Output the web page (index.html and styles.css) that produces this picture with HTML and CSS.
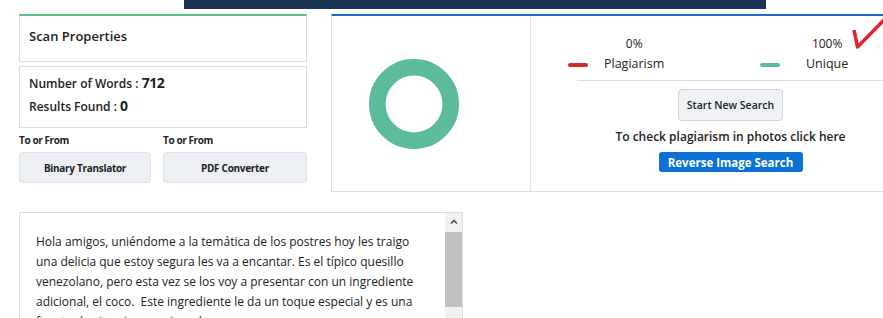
FILE: index.html
```html
<!DOCTYPE html>
<html lang="es">
<head>
    <meta charset="UTF-8">
    <meta name="viewport" content="width=device-width, initial-scale=1.0">
    <title>Plagiarism Report</title>
    <link rel="stylesheet" href="styles.css">
</head>
<body>
    <div class="topbar"></div>

    <div class="report">
        <div class="side">
            <div class="box box-head">Scan Properties</div>
            <div class="box box-stats">
                <p>Number of Words : <b>712</b></p>
                <p>Results Found : <b>0</b></p>
            </div>
            <div class="tools">
                <div class="tool">
                    <span class="tool-label">To or From</span>
                    <button class="tool-btn">Binary Translator</button>
                </div>
                <div class="tool">
                    <span class="tool-label">To or From</span>
                    <button class="tool-btn">PDF Converter</button>
                </div>
            </div>
        </div>

        <div class="result">
            <div class="chart">
                <svg width="90" height="90" viewBox="0 0 90 90">
                    <circle cx="45" cy="45" r="36.7" fill="none" stroke="#5cbb9a" stroke-width="16.6"/>
                </svg>
            </div>
            <div class="summary">
                <div class="legend">
                    <div class="legend-item first">
                        <span class="dash red"></span>
                        <div class="legend-text">
                            <span class="pct">0%</span>
                            <span class="name">Plagiarism</span>
                        </div>
                    </div>
                    <div class="legend-item">
                        <span class="dash green"></span>
                        <div class="legend-text">
                            <span class="pct">100%</span>
                            <span class="name">Unique</span>
                        </div>
                    </div>
                </div>
                <div class="actions">
                    <button class="new-search">Start New Search</button>
                    <p class="hint">To check plagiarism in photos click here</p>
                    <button class="reverse">Reverse Image Search</button>
                </div>
            </div>
            <svg class="tick" width="36" height="34" viewBox="0 0 36 34">
                <polyline points="3,12 6.5,29 35,0" fill="none" stroke="#e3222b" stroke-width="3.6" stroke-linejoin="round"/>
            </svg>
        </div>
    </div>

    <div class="content">
        <div class="content-text">
            Hola amigos, uniéndome a la temática de los postres hoy les traigo<br>
            una delicia que estoy segura les va a encantar. Es el típico quesillo<br>
            venezolano, pero esta vez se los voy a presentar con un ingrediente<br>
            adicional, el coco.&nbsp; Este ingrediente le da un toque especial y es una<br>
            fuente de vitaminas y minerales.
        </div>
        <div class="scrollbar">
            <span class="scroll-up">
                <svg width="8" height="5" viewBox="0 0 8 5"><polyline points="1,4.5 4,1.5 7,4.5" fill="none" stroke="#505050" stroke-width="1.6"/></svg>
            </span>
            <span class="scroll-thumb"></span>
        </div>
    </div>
</body>
</html>
```

FILE: styles.css
```css
html, body {
    overflow: hidden;
}
body {
    margin: 0;
    font-family: "Open Sans", Arial, sans-serif;
    color: #222;
    background: #fff;
}
p {
    margin: 0;
}
button {
    font-family: inherit;
    cursor: pointer;
}
.topbar {
    width: 582px;
    height: 9px;
    margin-left: 184px;
    background-color: #1b3456;
}
.report {
    display: flex;
    gap: 24px;
    margin-top: 5px;
    padding-left: 19px;
    width: 1000px;
}
.side {
    width: 288px;
    flex-shrink: 0;
}
.box {
    border: 1px solid #dcdcdc;
    padding: 0 9px;
}
.box-head {
    height: 48px;
    box-sizing: border-box;
    border-top: 2px solid #5cbf86;
    display: flex;
    align-items: center;
    padding-bottom: 5px;
    font-size: 13px;
    font-weight: 600;
}
.box-stats {
    margin-top: 4px;
    height: 62px;
    box-sizing: border-box;
    padding-top: 5px;
    font-size: 12px;
    font-weight: 600;
    line-height: 22px;
}
.box-stats b {
    font-size: 14px;
    font-weight: 700;
    letter-spacing: -0.4px;
    line-height: 22px;
}
.tools {
    display: flex;
    gap: 12px;
    margin-top: 4px;
}
.tool {
    display: flex;
    flex-direction: column;
}
.tool:first-child {
    width: 132px;
}
.tool:last-child {
    flex: 1;
}
.tool-label {
    font-size: 10px;
    font-weight: 700;
    letter-spacing: -0.4px;
    line-height: 16px;
}
.tool-btn {
    margin-top: 4px;
    height: 31px;
    background: #ecf0f4;
    border: 1px solid #dde2e8;
    border-radius: 4px;
    font-size: 10px;
    font-weight: 700;
    letter-spacing: -0.3px;
    color: #222;
}
.result {
    display: flex;
    width: 598px;
    height: 178px;
    flex-shrink: 0;
    box-sizing: border-box;
    border: 1px solid #dcdcdc;
    border-top: 2px solid #1a6dc2;
    position: relative;
}
.chart {
    width: 199px;
    border-right: 1px solid #e6e6e6;
    display: flex;
    align-items: center;
    padding-left: 37px;
    box-sizing: border-box;
}
.chart svg {
    margin-top: 1px;
}
.summary {
    flex: 1;
    display: flex;
    flex-direction: column;
}
.legend {
    display: flex;
    padding: 18px 0 0 37px;
}
.legend-item {
    display: flex;
    align-items: flex-end;
    gap: 16px;
}
.legend-item.first {
    width: 192px;
}
.legend-item:not(.first) {
    gap: 26px;
}
.dash {
    width: 20px;
    height: 4px;
    border-radius: 2px;
    margin-bottom: 7px;
}
.dash.red {
    background: #d42a2a;
}
.dash.green {
    background: #5cbb9a;
}
.legend-text {
    display: flex;
    flex-direction: column;
    align-items: center;
    font-size: 12px;
    font-weight: 500;
    line-height: 20px;
}
.legend-text .name {
    font-size: 12.5px;
}
.actions {
    margin-left: 46px;
    margin-top: 6px;
    border-top: 1px solid #d6dbe0;
    display: flex;
    flex-direction: column;
    align-items: center;
    padding-top: 8px;
    padding-right: 44px;
}
.new-search {
    width: 105px;
    height: 32px;
    background: #eef1f5;
    border: 1px solid #cfd5dc;
    border-radius: 4px;
    font-size: 10.5px;
    font-weight: 600;
    color: #222;
}
.hint {
    margin-top: 7px;
    font-size: 12px;
    font-weight: 600;
    line-height: 18px;
}
.reverse {
    margin-top: 6px;
    width: 144px;
    height: 20px;
    background: #0c72d6;
    border: none;
    border-radius: 3px;
    color: #fff;
    font-size: 11.5px;
    font-weight: 700;
}
.tick {
    position: absolute;
    left: 519px;
    top: 2px;
}
.content {
    display: flex;
    margin: 20px 0 0 19px;
    width: 444px;
    height: 120px;
    border: 1px solid #dcdcdc;
    box-sizing: border-box;
}
.content-text {
    flex: 1;
    padding: 19px 0 0 16px;
    font-size: 12px;
    line-height: 20px;
    white-space: nowrap;
    color: #222;
}
.scrollbar {
    width: 17px;
    display: flex;
    flex-direction: column;
    background: #f1f1f1;
}
.scroll-up {
    height: 17px;
    display: flex;
    align-items: center;
    justify-content: center;
}
.scroll-thumb {
    height: 75px;
    margin-top: 2px;
    background: #c1c1c1;
}
```
